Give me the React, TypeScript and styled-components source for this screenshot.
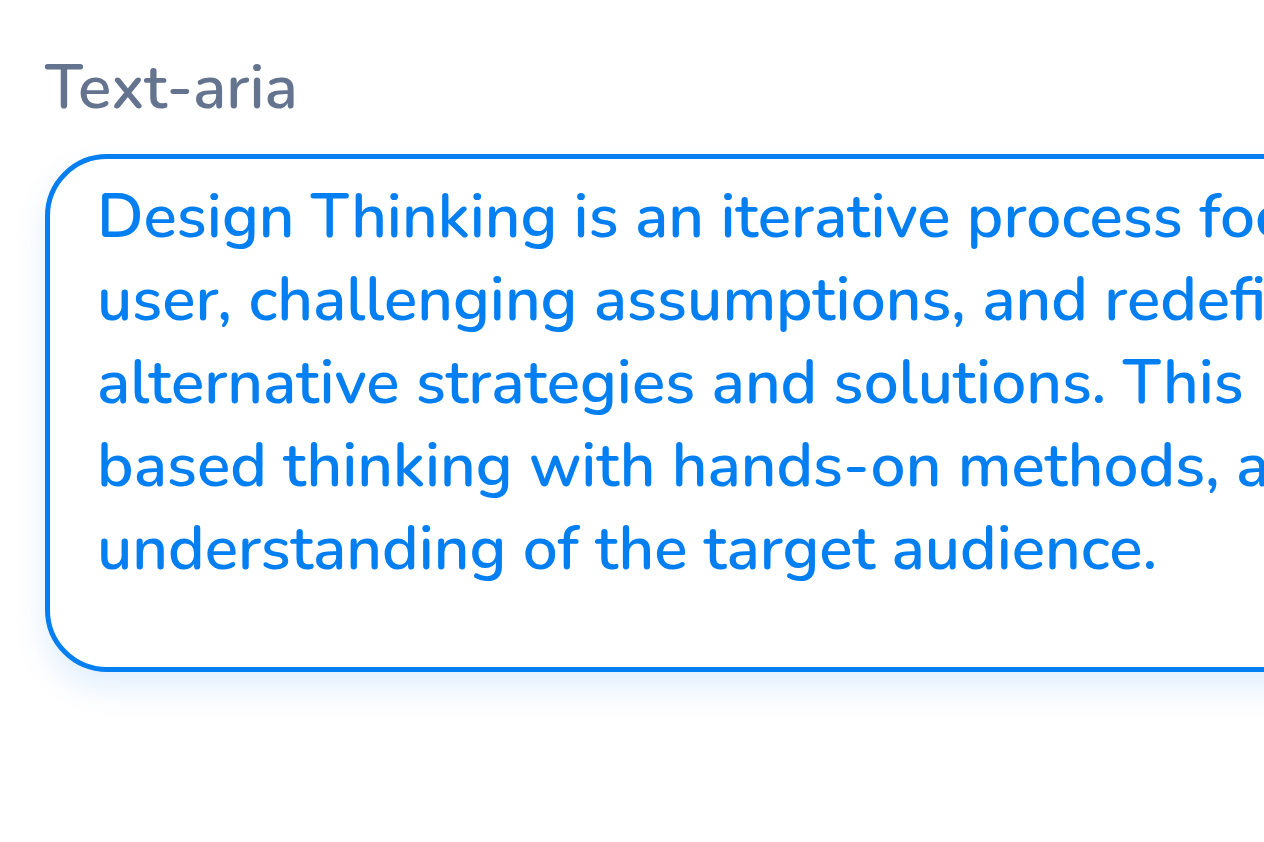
import React from "react";
import styled, { createGlobalStyle } from "styled-components";

const blue = "#047ff2";

const GlobalStyle = createGlobalStyle`
  *, *::before, *::after { box-sizing: border-box; }
  body {
    margin: 0;
    background: #ffffff;
    overflow-x: hidden;
    font-family: Nunito, Lato, "Open Sans", sans-serif;
    font-weight: 600;
  }
`;

const Page = styled.main`
  padding: 47px 0 64px 45px;
  overflow: hidden;
`;

const Field = styled.div`
  display: flex;
  flex-direction: column;
  gap: 25px;
`;

const Label = styled.label`
  color: #64748f;
  font-size: 62px;
  line-height: 82px;
`;

const TextArea = styled.textarea`
  display: block;
  width: calc(100% + 96px);
  padding: 16px 47px 77px;
  border: 5px solid ${blue};
  border-radius: 62px;
  outline: none;
  resize: none;
  overflow: hidden;
  background: #ffffff;
  box-shadow: 0 16px 32px rgba(4, 127, 242, 0.12);
  color: ${blue};
  font: inherit;
  font-size: 62px;
  line-height: 83px;
  white-space: pre;
`;

const description = [
  "Design Thinking is an iterative process foc",
  "user, challenging assumptions, and redefi",
  "alternative strategies and solutions. This",
  "based thinking with hands-on methods, a",
  "understanding of the target audience.",
].join("\n");

export default function App() {
  return (
    <>
      <GlobalStyle />
      <Page>
        <Field>
          <Label htmlFor="description">Text-aria</Label>
          <TextArea id="description" rows={5} wrap="off" spellCheck={false} defaultValue={description} />
        </Field>
      </Page>
    </>
  );
}
